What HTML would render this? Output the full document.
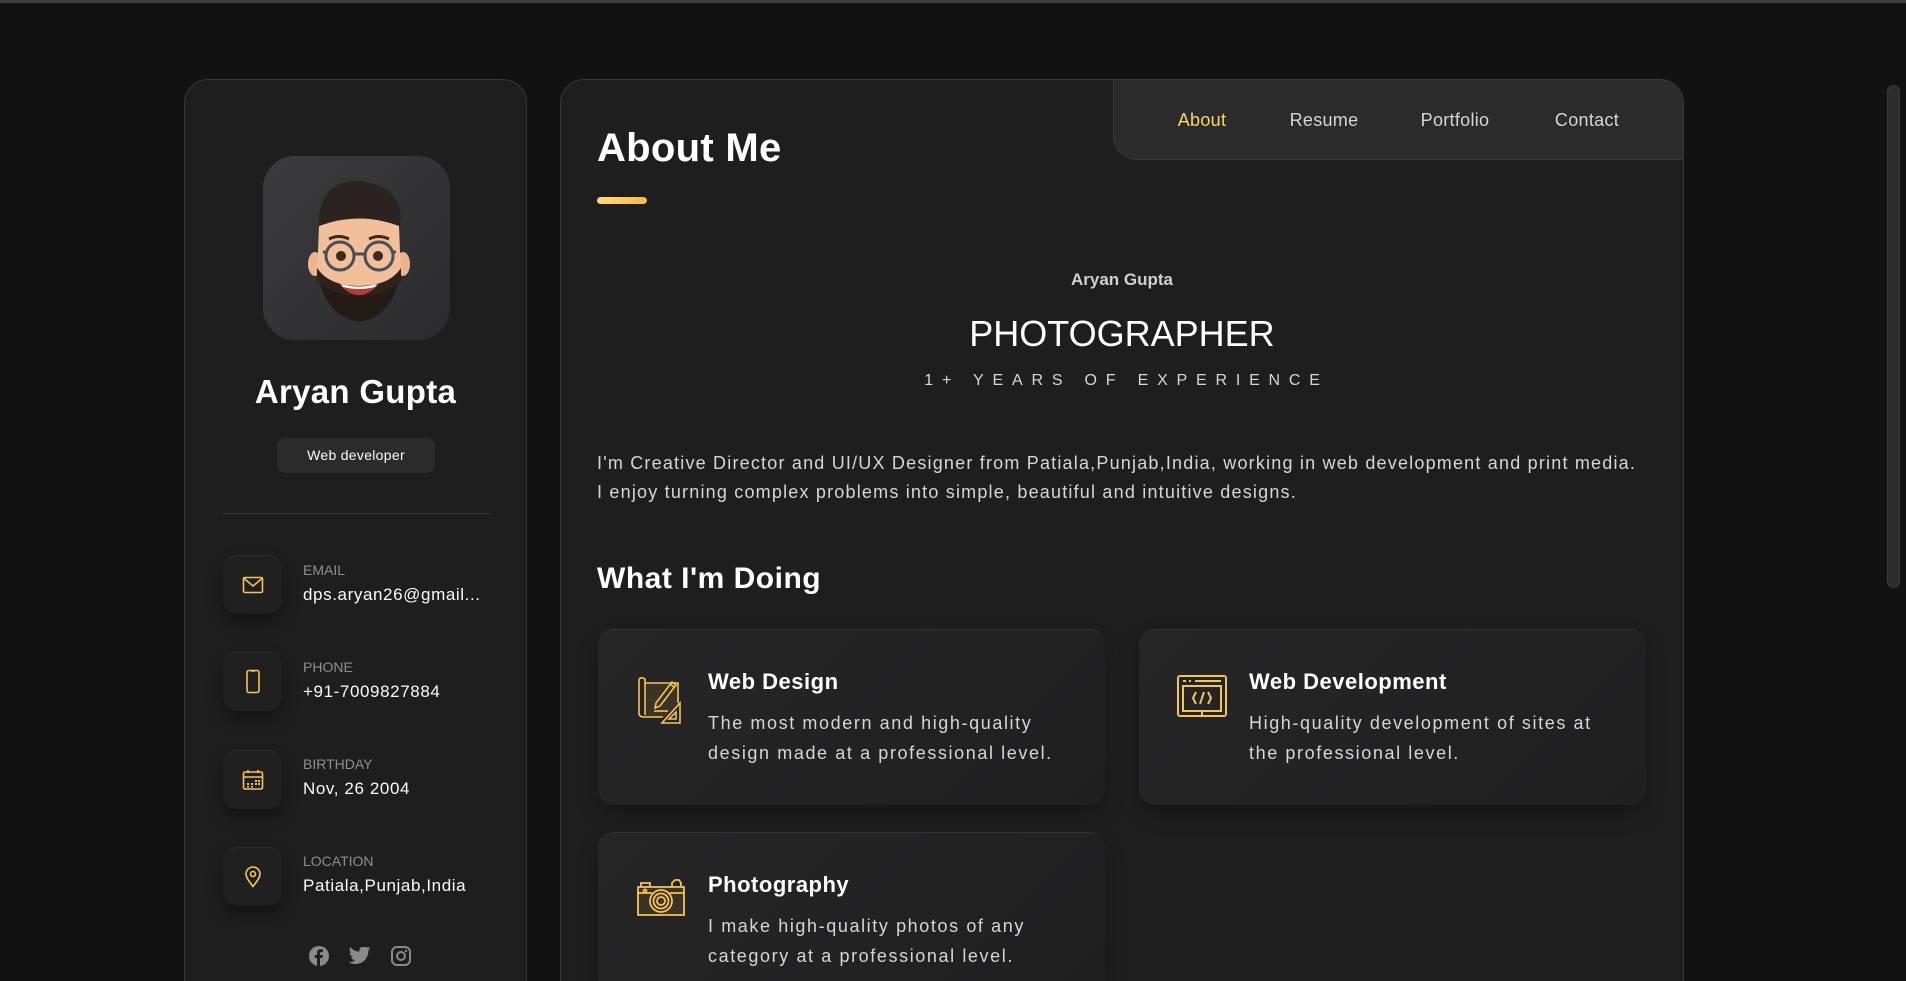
<!DOCTYPE html>
<html><head><meta charset="utf-8">
<style>
*{margin:0;padding:0;box-sizing:border-box}
html,body{width:1906px;height:981px;overflow:hidden;background:#121212;font-family:"Liberation Sans",sans-serif;color:#fff}
.wrap{position:relative;width:1906px;height:981px;overflow:hidden;background:#121212}
.topline{position:absolute;left:0;top:0;width:1906px;height:3px;background:#3d3d3d}
.scroll{position:absolute;left:1887px;top:85px;width:13px;height:503px;border-radius:7px;background:#2c2c2c;border:1px solid #3a3a3a}
.side{position:absolute;left:184px;top:79px;width:343px;height:902px;background:#1e1e1f;border:1px solid #383838;border-bottom:none;border-radius:24px 24px 0 0}
.avatar{position:absolute;left:78px;top:76px;width:187px;height:184px;border-radius:32px;background:linear-gradient(135deg,#3b3b3d,#2b2b2d)}
.name{position:absolute;left:0;width:100%;top:293px;text-align:center;font-size:33px;font-weight:700;letter-spacing:.3px}
.badge{position:absolute;left:92px;top:358px;width:158px;height:35px;background:#2b2b2c;border-radius:8px;font-size:14px;text-align:center;line-height:35px;color:#fafafa;letter-spacing:.3px}
.div{position:absolute;left:38px;top:433px;width:267px;height:1px;background:#383838}
.ci{position:absolute;left:38px;width:59px;height:59px;border-radius:14px;background:#202021;box-shadow:0 8px 16px rgba(0,0,0,.35);border-top:1px solid #2e2e2e;display:flex;align-items:center;justify-content:center}
.lbl{position:absolute;left:118px;font-size:14px;color:#8e8e8e}
.val{position:absolute;left:118px;font-size:17px;color:#fafafa;letter-spacing:.6px}
.main{position:absolute;left:560px;top:79px;width:1124px;height:902px;background:#1e1e1f;border:1px solid #383838;border-bottom:none;border-radius:24px 24px 0 0;overflow:hidden}
.nav{position:absolute;left:552px;top:-1px;width:572px;height:81px;background:#2b2b2c;border:1px solid #383838;border-radius:0 24px 0 24px}
.nav span{position:absolute;top:30px;font-size:18px;color:#d6d6d6;transform:translateX(-50%);letter-spacing:.3px}
h2{position:absolute;left:36px;top:46px;font-size:40px;font-weight:700;letter-spacing:.3px}
.bar{position:absolute;left:36px;top:117px;width:50px;height:7px;border-radius:4px;background:linear-gradient(90deg,#ffdb70,#f5b84f)}
.c{position:absolute;left:0;width:100%;text-align:center}
p.t{position:absolute;left:36px;top:369px;font-size:18px;line-height:29px;color:#d6d6d6;letter-spacing:1.2px;white-space:nowrap}
h3{position:absolute;left:36px;top:482px;font-size:30px;font-weight:700;letter-spacing:.5px}
.card{position:absolute;width:507px;height:176px;border-radius:16px;background:linear-gradient(135deg,#262627,#1f1f20);border-top:1px solid #333;box-shadow:0 10px 20px rgba(0,0,0,.25)}
.card svg{position:absolute;left:38px;top:45px}
.card b{position:absolute;left:110px;top:39px;font-size:22px;letter-spacing:.5px}
.card p{position:absolute;left:110px;top:78px;font-size:18px;line-height:30px;color:#d6d6d6;letter-spacing:1.6px;white-space:nowrap}
</style></head><body><div class="wrap">
<div class="topline"></div>
<div class="scroll"></div>

<div class="side">
 <div class="avatar">
  <svg width="187" height="184" viewBox="0 0 187 184">
   <path d="M56 60 Q60 25 95 25 Q135 28 138 60 L136 80 L56 80Z" fill="#2b2320"/>
   <ellipse cx="52" cy="108" rx="7" ry="12" fill="#e9b48e"/>
   <ellipse cx="140" cy="108" rx="7" ry="12" fill="#e9b48e"/>
   <path d="M56 70 Q96 55 136 70 L138 120 Q96 140 54 120Z" fill="#f1c09b"/>
   <path d="M54 112 Q60 160 96 166 Q132 160 138 112 Q130 135 96 138 Q62 135 54 112Z" fill="#241a16"/>
   <path d="M54 112 L54 125 Q70 140 96 140 Q122 140 138 125 L138 112 Q126 130 96 130 Q66 130 54 112Z" fill="#2d211b"/>
   <path d="M76 128 Q96 150 116 128 Q96 136 76 128Z" fill="#b83a35"/>
   <path d="M78 128 Q96 133 114 128 L112 131 Q96 135 80 131Z" fill="#fff"/>
   <circle cx="77" cy="100" r="14" fill="none" stroke="#4a4e55" stroke-width="3"/>
   <circle cx="116" cy="100" r="14" fill="none" stroke="#4a4e55" stroke-width="3"/>
   <path d="M91 98 L102 98 M60 96 L63 96 M130 96 L133 96" stroke="#4a4e55" stroke-width="3"/>
   <circle cx="78" cy="100" r="5" fill="#3a2a22"/><circle cx="115" cy="100" r="5" fill="#3a2a22"/>
   <path d="M66 83 Q76 78 86 83 M106 83 Q116 78 126 83" stroke="#3a2a22" stroke-width="3" fill="none"/>
  </svg>
 </div>
 <div class="name">Aryan Gupta</div>
 <div class="badge">Web developer</div>
 <div class="div"></div>

 <div class="ci" style="top:475px"><svg width="22" height="18" viewBox="0 0 22 18"><rect x="1.5" y="1.5" width="19" height="15" rx="1.5" fill="none" stroke="#f5c35b" stroke-width="1.6"/><path d="M1.5 2 L11 10 L20.5 2" fill="none" stroke="#f5c35b" stroke-width="1.6"/></svg></div>
 <div class="lbl" style="top:482px">EMAIL</div><div class="val" style="top:505px">dps.aryan26@gmail...</div>

 <div class="ci" style="top:572px"><svg width="16" height="26" viewBox="0 0 16 26"><rect x="2" y="1.5" width="12" height="22" rx="2" fill="none" stroke="#f5c35b" stroke-width="1.6"/><path d="M6 2 L10 2" stroke="#f5c35b" stroke-width="1.6"/></svg></div>
 <div class="lbl" style="top:579px">PHONE</div><div class="val" style="top:602px">+91-7009827884</div>

 <div class="ci" style="top:670px"><svg width="22" height="22" viewBox="0 0 22 22"><rect x="1.5" y="3" width="19" height="17" rx="1.5" fill="none" stroke="#f5c35b" stroke-width="1.6"/><path d="M1.5 8 L20.5 8 M6 1 V4 M16 1 V4" stroke="#f5c35b" stroke-width="1.6"/><g fill="#f5c35b"><rect x="5" y="14" width="2" height="2"/><rect x="9" y="14" width="2" height="2"/><rect x="13" y="14" width="2" height="2"/><rect x="13" y="11" width="2" height="2"/><rect x="16" y="11" width="2" height="2"/><rect x="16" y="14" width="2" height="2"/><rect x="5" y="17" width="2" height="1.5"/><rect x="9" y="17" width="2" height="1.5"/></g></svg></div>
 <div class="lbl" style="top:676px">BIRTHDAY</div><div class="val" style="top:699px">Nov, 26 2004</div>

 <div class="ci" style="top:767px"><svg width="18" height="22" viewBox="0 0 18 22"><path d="M9 20.5 C4 14 2 11 2 8 A7 7 0 0 1 16 8 C16 11 14 14 9 20.5Z" fill="none" stroke="#f5c35b" stroke-width="1.6"/><circle cx="9" cy="8" r="2.5" fill="none" stroke="#f5c35b" stroke-width="1.6"/></svg></div>
 <div class="lbl" style="top:773px">LOCATION</div><div class="val" style="top:796px">Patiala,Punjab,India</div>

 <svg style="position:absolute;left:124px;top:866px" width="20" height="20" viewBox="0 0 20 20"><circle cx="10" cy="10" r="10" fill="#8a8a8a"/><path d="M11 20 V12 H13.5 L14 9 H11 V7.5 C11 6.6 11.4 6 12.5 6 H14 V3.4 C13.5 3.3 12.6 3.2 11.7 3.2 C9.5 3.2 8 4.5 8 7 V9 H5.7 V12 H8 V20Z" fill="#1e1e1f"/></svg>
 <svg style="position:absolute;left:164px;top:867px" width="22" height="18" viewBox="0 0 24 20"><path d="M23.6 2.3 C22.7 2.7 21.8 3 20.8 3.1 C21.8 2.5 22.6 1.5 23 .4 C22 1 21 1.4 19.9 1.6 C18.9.6 17.5 0 16 0 C13.1 0 10.8 2.4 10.8 5.3 C10.8 5.7 10.8 6.1 10.9 6.5 C6.5 6.3 2.7 4.2.1 1 C-.4 1.8-.6 2.7-.6 3.6 C-.6 5.4.3 7 1.7 8 C.9 8 .1 7.7-.6 7.3 C-.6 9.9 1.2 12 3.6 12.5 C2.9 12.8 1.9 12.8 1.2 12.7 C1.8 14.8 3.8 16.4 6.1 16.4 C4.3 17.8 2 18.7-.5 18.7 L-1.7 18.6 C.6 20.1 3.4 21 6.3 21 C16 21 21.3 13 21.3 6 L21.3 5.3 C22.3 4.6 23 3.7 23.6 2.3Z" fill="#8a8a8a" transform="translate(1,-1) scale(.95)"/></svg>
 <svg style="position:absolute;left:206px;top:866px" width="20" height="20" viewBox="0 0 20 20"><rect x="1" y="1" width="18" height="18" rx="5" fill="none" stroke="#8a8a8a" stroke-width="2"/><circle cx="10" cy="10" r="4" fill="none" stroke="#8a8a8a" stroke-width="2"/><circle cx="15" cy="5" r="1.2" fill="#8a8a8a"/></svg>
</div>

<div class="main">
 <div class="nav">
  <span style="left:88px;color:#ffd26b">About</span>
  <span style="left:210px">Resume</span>
  <span style="left:341px">Portfolio</span>
  <span style="left:473px">Contact</span>
 </div>
 <h2>About Me</h2>
 <div class="bar"></div>
 <div class="c" style="top:190px;font-size:17px;font-weight:700;color:#d0d0d0">Aryan Gupta</div>
 <div class="c" style="top:233px;font-size:36px;font-weight:300;color:#fff">PHOTOGRAPHER</div>
 <div class="c" style="top:292px;font-size:16px;letter-spacing:8.8px;color:#d6d6d6;padding-left:9px">1+ YEARS OF EXPERIENCE</div>
 <p class="t">I'm Creative Director and UI/UX Designer from Patiala,Punjab,India, working in web development and print media.<br>I enjoy turning complex problems into simple, beautiful and intuitive designs.</p>
 <h3>What I'm Doing</h3>

 <div class="card" style="left:37px;top:549px">
  <svg width="50" height="50" viewBox="0 0 50 50" fill="none" stroke="#f5c35b" stroke-width="1.6"><path d="M9 8 H42 V28 L30 42 H9Z" fill="#3a3326" stroke="none"/><path d="M3 6 V38 Q3 42 8 42 H27 M3 6 Q3 2 7 3 L9 4 V40 M9 8 H42 V28"/><path d="M20 28 L36 7 L40 10 L24 31 L19 33Z M34 9 L38 12"/><path d="M18 36 H32"/><path d="M44 28 V48 H26Z M40 37 V44 H33Z"/></svg>
  <b>Web Design</b>
  <p>The most modern and high-quality<br>design made at a professional level.</p>
 </div>
 <div class="card" style="left:578px;top:549px">
  <svg width="50" height="44" viewBox="0 0 50 44" fill="none" stroke="#f5c35b" stroke-width="2"><rect x="1" y="1" width="48" height="40" rx="2"/><path d="M6 6 H9 M12 6 H14 M18 6 H44 M6 11 H44 V36 H6Z" /><path d="M19 17 L16 23 L19 29 M31 17 L34 23 L31 29 M27 17 L23 29 M25 36 V40"/></svg>
  <b>Web Development</b>
  <p>High-quality development of sites at<br>the professional level.</p>
 </div>
 <div class="card" style="left:37px;top:752px;height:150px;border-radius:16px 16px 0 0">
  <svg width="50" height="40" viewBox="0 0 50 40" fill="none" stroke="#f5c35b" stroke-width="1.8"><path d="M2 9 H48 V37 H2Z" fill="#3a3326"/><path d="M5 9 V5 H14 V9 M36 9 V5 L39 2 H43 L45 5 V9 M2 15 H16 M34 15 H48"/><circle cx="25" cy="23" r="11"/><circle cx="25" cy="23" r="7.5"/><circle cx="25" cy="23" r="4"/><circle cx="9" cy="13" r="1.5"/></svg>
  <b>Photography</b>
  <p>I make high-quality photos of any<br>category at a professional level.</p>
 </div>
</div>
</div></body></html>
